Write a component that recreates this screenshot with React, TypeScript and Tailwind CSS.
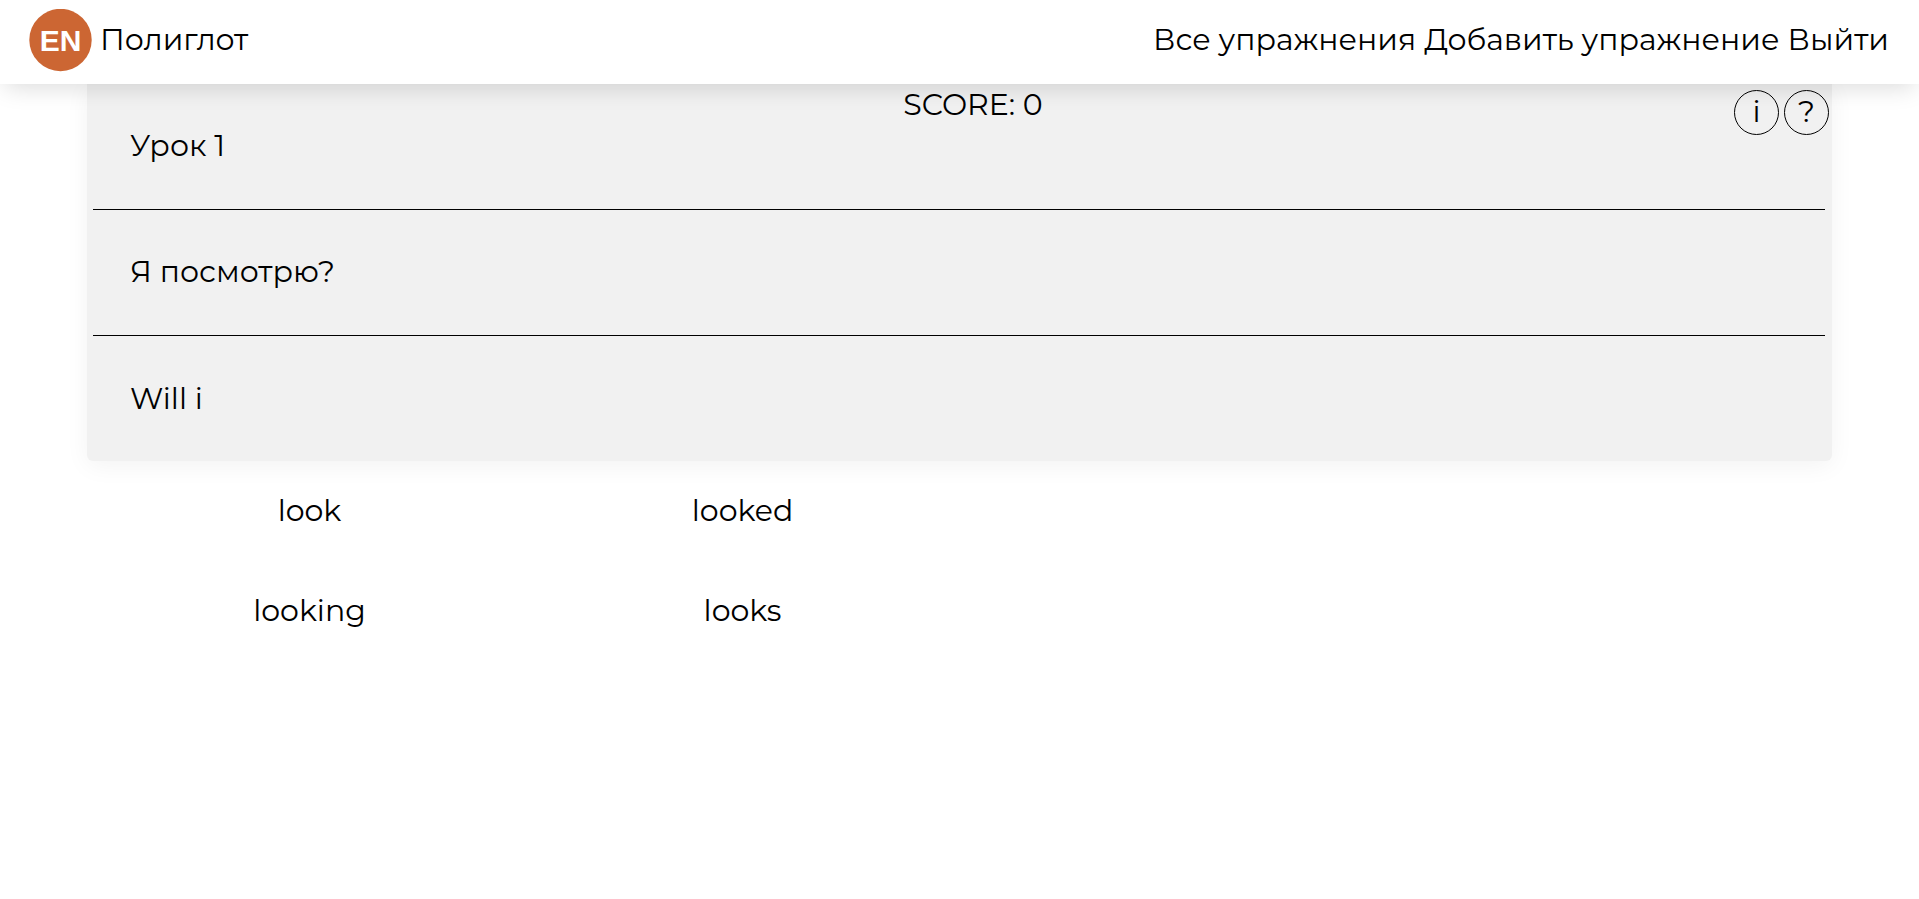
import { useState } from "react";

const navLinks = ["Все упражнения", "Добавить упражнение", "Выйти"];
const words = ["look", "looked", "", "", "looking", "looks"];

function Logo() {
  return (
    <svg className="h-[63px] w-[63px]" viewBox="0 0 63 63" role="img" aria-label="EN">
      <circle cx="31.5" cy="31" r="31.2" fill="#cc6633" />
      <text
        x="31.5"
        y="42"
        textAnchor="middle"
        fontFamily="Liberation Sans, sans-serif"
        fontWeight="700"
        fontSize="30"
        fill="#fff"
      >
        EN
      </text>
    </svg>
  );
}

function RoundButton({ label, title }: { label: string; title: string }) {
  return (
    <button
      type="button"
      aria-label={title}
      className="flex h-[45px] w-[45px] items-center justify-center rounded-full border border-black pb-px"
    >
      {label}
    </button>
  );
}

export default function App() {
  const [answer, setAnswer] = useState("Will i");

  return (
    <div className="min-h-screen bg-white font-['Montserrat','Inter',sans-serif] text-[30px] leading-9 font-normal text-black">
      <header className="relative z-10 flex h-21 items-center justify-between bg-white pr-[30px] pb-1 pl-[29px] shadow-[0_8px_25px_-5px_rgba(0,0,0,0.15)]">
        <a href="#" className="flex items-center gap-2">
          <Logo />
          <span>Полиглот</span>
        </a>
        <nav className="flex gap-2">
          {navLinks.map((link) => (
            <a key={link} href="#">
              {link}
            </a>
          ))}
        </nav>
      </header>

      <main className="px-[87px]">
        <section className="rounded-b-md bg-[#f1f1f1] pr-[7px] pl-1.5 shadow-[0_5px_25px_rgba(0,0,0,0.05)]">
          <div className="grid h-[126px] grid-cols-[1fr_auto_1fr] items-start border-b border-black">
            <h1 className="self-center pb-0.5 pl-[37px]">Урок 1</h1>
            <p className="pt-[3px] pl-7">SCORE: 0</p>
            <div className="-mr-1 flex justify-end gap-[5px] pt-1.5">
              <RoundButton label="i" title="Информация" />
              <RoundButton label="?" title="Помощь" />
            </div>
          </div>
          <p className="flex h-[126px] items-center border-b border-black pb-0.5 pl-[37px]">Я посмотрю?</p>
          <p className="flex h-[125px] items-center pl-[37px]">{answer}</p>
        </section>

        <div className="mr-[7px] ml-1.5 grid auto-rows-[100px] grid-cols-4">
          {words.map((word, i) =>
            word ? (
              <button key={word} type="button" onClick={() => setAnswer(`${answer} ${word}`)}>
                {word}
              </button>
            ) : (
              <span key={i} />
            ),
          )}
        </div>
      </main>
    </div>
  );
}
